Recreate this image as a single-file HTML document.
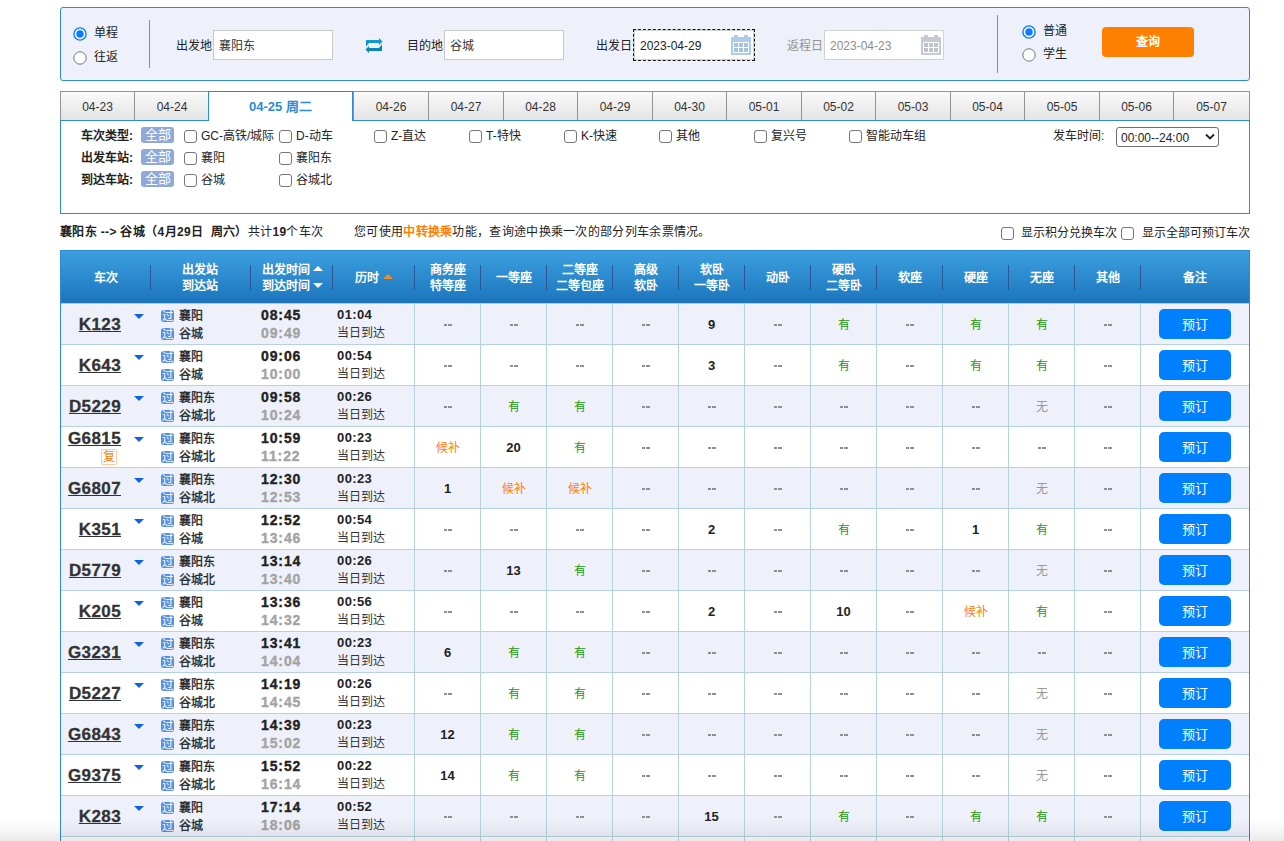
<!DOCTYPE html><html lang="zh-CN"><head><meta charset="utf-8"><title>12306</title><style>
*{box-sizing:border-box;margin:0;padding:0}
html,body{width:1284px;height:841px;overflow:hidden;background:#fff}
body{position:relative;font-family:"Liberation Sans", sans-serif;font-size:12px;color:#333}
.a{position:absolute;white-space:nowrap}
.t{line-height:16px;height:16px}
.radio{position:absolute;width:14px;height:14px}

.cb{position:absolute;width:13px;height:13px;border:1px solid #767676;border-radius:3px;background:#fff}
.lab{position:absolute;white-space:nowrap;line-height:16px;font-size:12px;color:#222}
.inp{position:absolute;background:#fff;border:1px solid #c9c9c9}
.tab{position:absolute;top:91px;height:30px;border-top:1px solid #939393;border-left:1px solid #939393;background:linear-gradient(#fafafa,#e3e3e3);text-align:center;line-height:31px;font-size:12px;color:#333}
.badge{position:absolute;width:33px;height:16px;border-radius:3px;background:#8ea9da;color:#fff;font-size:13px;line-height:16px;text-align:center}
.flab{position:absolute;font-weight:bold;font-size:12px;line-height:16px;color:#222;white-space:nowrap}
.ftxt{position:absolute;font-size:12px;line-height:16px;color:#222;white-space:nowrap}
.hd{position:absolute;top:250px;left:60px;width:1190px;height:53px;border-top:1px solid #2a8ad2;background:linear-gradient(#3c9fdf,#1c75bd)}
.hdv{position:absolute;top:265px;width:1px;height:25px;background:#2d5597}
.ht{position:absolute;color:#fff;font-weight:bold;font-size:12px;line-height:16px;text-align:center;white-space:nowrap}
.row{position:absolute;left:60px;width:1190px;height:41px;border-bottom:1px solid #b6d2e2}
.vl{position:absolute;width:1px;background:#b6d2e2}
.tn{position:absolute;font-weight:bold;font-size:17px;line-height:20px;letter-spacing:0.4px;-webkit-text-stroke:0.3px #333;text-decoration:underline;text-decoration-thickness:1px;text-underline-offset:1px;color:#333;text-align:right;white-space:nowrap}
.tri{position:absolute;width:0;height:0;border-left:5px solid transparent;border-right:5px solid transparent;border-top:5.5px solid #0d62e6}
.guo{position:absolute;width:13px;height:12px;border-radius:2.5px;background:#5b8fdf;color:#fff;font-size:11.5px;line-height:12px;text-align:center;overflow:hidden}
.st{position:absolute;font-size:12px;line-height:16px;color:#222;-webkit-text-stroke:0.3px #222;white-space:nowrap}
.tm{position:absolute;font-size:14px;line-height:16px;font-weight:bold;white-space:nowrap;letter-spacing:0.9px;-webkit-text-stroke:0.35px currentColor}
.du{position:absolute;font-size:13px;line-height:16px;font-weight:bold;color:#222;white-space:nowrap;letter-spacing:0.4px}
.dd{position:absolute;font-size:12px;line-height:16px;color:#333;white-space:nowrap}
.sv{position:absolute;width:65px;text-align:center;line-height:16px;font-size:12px;white-space:nowrap}
.btn{position:absolute;width:72px;height:30px;border-radius:5px;background:#0080ff;color:#fff;font-size:13px;line-height:31px;text-align:center;font-weight:500}
</style></head><body>
<div class="a" style="left:60px;top:7px;width:1190px;height:74px;border:1px solid #2f8bd1;border-radius:3px;background:#eef1f9"></div>
<svg class="a" style="left:72.5px;top:26.5px" width="14" height="14" viewBox="0 0 14 14"><circle cx="7" cy="7" r="6.1" fill="#fff" stroke="#0a7cff" stroke-width="1.4"/><circle cx="7" cy="7" r="3.7" fill="#0a7cff"/></svg>
<svg class="a" style="left:72.5px;top:50.5px" width="14" height="14" viewBox="0 0 14 14"><circle cx="7" cy="7" r="6.2" fill="#fff" stroke="#777" stroke-width="1"/></svg>
<div class="lab" style="left:94px;top:25px">单程</div>
<div class="lab" style="left:94px;top:49px">往返</div>
<div class="a" style="left:149px;top:20px;width:1px;height:48px;background:#4d9ad6"></div>
<div class="lab" style="left:176px;top:38px">出发地</div>
<div class="inp" style="left:213px;top:30px;width:120px;height:30px"></div>
<div class="lab" style="left:219px;top:38px;color:#333">襄阳东</div>
<svg class="a" style="left:364px;top:36px" width="20" height="19" viewBox="0 0 20 19"><defs><linearGradient id="sg" x1="0" y1="0" x2="0" y2="1"><stop offset="0" stop-color="#12a2da"/><stop offset="1" stop-color="#0a7bab"/></linearGradient></defs><path d="M2 4 H15 V2 L18.5 5.5 L15 9 V7 H5 L2 10.5 Z M18 8 V15 H5 V17 L1.5 13.5 L5 10 V12 H15 Z" fill="url(#sg)"/></svg>
<div class="lab" style="left:407px;top:38px">目的地</div>
<div class="inp" style="left:444px;top:30px;width:120px;height:30px"></div>
<div class="lab" style="left:450px;top:38px;color:#333">谷城</div>
<div class="lab" style="left:596px;top:38px">出发日</div>
<div class="inp" style="left:634px;top:30px;width:120px;height:30px;border-color:#d0d0d0"></div>
<div class="a" style="left:633px;top:29px;width:122px;height:32px;border:1px dashed #111"></div>
<div class="lab" style="left:640px;top:38px;color:#222">2023-04-29</div>
<svg class="a" style="left:731px;top:35px" width="20" height="20" viewBox="0 0 20 20"><rect x="0" y="2" width="20" height="18" fill="#abcdea"/><rect x="3" y="0" width="4" height="2" fill="#abcdea"/><rect x="13" y="0" width="4" height="2" fill="#abcdea"/><rect x="2" y="7" width="16" height="11" fill="#fff"/><g fill="#a3c3e2"><rect x="3" y="8" width="4" height="4"/><rect x="8" y="8" width="4" height="4"/><rect x="13" y="8" width="4" height="4"/><rect x="3" y="13" width="4" height="4"/><rect x="8" y="13" width="4" height="4"/><rect x="13" y="13" width="4" height="4"/></g></svg>
<div class="lab" style="left:787px;top:38px;color:#939393">返程日</div>
<div class="inp" style="left:824px;top:30px;width:120px;height:30px;border-color:#d2d2d2"></div>
<div class="lab" style="left:830px;top:38px;color:#8e8e8e">2023-04-23</div>
<svg class="a" style="left:921px;top:35px" width="20" height="20" viewBox="0 0 20 20"><rect x="0" y="2" width="20" height="18" fill="#c6cad4"/><rect x="3" y="0" width="4" height="2" fill="#c6cad4"/><rect x="13" y="0" width="4" height="2" fill="#c6cad4"/><rect x="2" y="7" width="16" height="11" fill="#fff"/><g fill="#bfc3cd"><rect x="3" y="8" width="4" height="4"/><rect x="8" y="8" width="4" height="4"/><rect x="13" y="8" width="4" height="4"/><rect x="3" y="13" width="4" height="4"/><rect x="8" y="13" width="4" height="4"/><rect x="13" y="13" width="4" height="4"/></g></svg>
<div class="a" style="left:997px;top:15px;width:1px;height:58px;background:#4d9ad6"></div>
<svg class="a" style="left:1021.5px;top:24.5px" width="14" height="14" viewBox="0 0 14 14"><circle cx="7" cy="7" r="6.1" fill="#fff" stroke="#0a7cff" stroke-width="1.4"/><circle cx="7" cy="7" r="3.7" fill="#0a7cff"/></svg>
<svg class="a" style="left:1021.5px;top:47.5px" width="14" height="14" viewBox="0 0 14 14"><circle cx="7" cy="7" r="6.2" fill="#fff" stroke="#777" stroke-width="1"/></svg>
<div class="lab" style="left:1043px;top:23px">普通</div>
<div class="lab" style="left:1043px;top:46px">学生</div>
<div class="a" style="left:1102px;top:27px;width:92px;height:30px;border-radius:4px;background:#ff8000;color:#fff;font-size:12px;line-height:31px;text-align:center;font-weight:bold">查询</div>
<div class="a" style="left:60px;top:120px;width:1190px;height:94px;border:1px solid #2f8bd1;background:#fff"></div>
<div class="tab" style="left:60px;width:74px">04-23</div>
<div class="tab" style="left:134px;width:75px">04-24</div>
<div class="a" style="left:208px;top:91px;width:145px;height:30px;border:1px solid #2f8bd1;border-bottom:none;background:#fff;text-align:center;line-height:29px;font-size:13px;font-weight:bold;color:#2a8ad8">04-25 周二</div>
<div class="tab" style="left:353px;width:75px">04-26</div>
<div class="tab" style="left:428px;width:75px">04-27</div>
<div class="tab" style="left:503px;width:74px">04-28</div>
<div class="tab" style="left:577px;width:75px">04-29</div>
<div class="tab" style="left:652px;width:74px">04-30</div>
<div class="tab" style="left:726px;width:75px">05-01</div>
<div class="tab" style="left:801px;width:74px">05-02</div>
<div class="tab" style="left:875px;width:75px">05-03</div>
<div class="tab" style="left:950px;width:74px">05-04</div>
<div class="tab" style="left:1024px;width:75px">05-05</div>
<div class="tab" style="left:1099px;width:74px">05-06</div>
<div class="tab" style="left:1173px;width:77px;border-right:1px solid #939393">05-07</div>
<div class="a" style="left:60px;top:120px;width:149px;height:1px;background:#2f8bd1"></div>
<div class="a" style="left:353px;top:120px;width:897px;height:1px;background:#2f8bd1"></div>
<div class="flab" style="left:81px;top:128px">车次类型:</div>
<div class="badge" style="left:141px;top:127px">全部</div>
<div class="flab" style="left:81px;top:150px">出发车站:</div>
<div class="badge" style="left:141px;top:149px">全部</div>
<div class="flab" style="left:81px;top:172px">到达车站:</div>
<div class="badge" style="left:141px;top:171px">全部</div>
<div class="cb" style="left:184px;top:130px"></div>
<div class="ftxt" style="left:201px;top:128px">GC-高铁/城际</div>
<div class="cb" style="left:279px;top:130px"></div>
<div class="ftxt" style="left:296px;top:128px">D-动车</div>
<div class="cb" style="left:374px;top:130px"></div>
<div class="ftxt" style="left:391px;top:128px">Z-直达</div>
<div class="cb" style="left:469px;top:130px"></div>
<div class="ftxt" style="left:486px;top:128px">T-特快</div>
<div class="cb" style="left:564px;top:130px"></div>
<div class="ftxt" style="left:581px;top:128px">K-快速</div>
<div class="cb" style="left:659px;top:130px"></div>
<div class="ftxt" style="left:676px;top:128px">其他</div>
<div class="cb" style="left:754px;top:130px"></div>
<div class="ftxt" style="left:771px;top:128px">复兴号</div>
<div class="cb" style="left:849px;top:130px"></div>
<div class="ftxt" style="left:866px;top:128px">智能动车组</div>
<div class="cb" style="left:184px;top:152px"></div>
<div class="ftxt" style="left:201px;top:150px">襄阳</div>
<div class="cb" style="left:279px;top:152px"></div>
<div class="ftxt" style="left:296px;top:150px">襄阳东</div>
<div class="cb" style="left:184px;top:174px"></div>
<div class="ftxt" style="left:201px;top:172px">谷城</div>
<div class="cb" style="left:279px;top:174px"></div>
<div class="ftxt" style="left:296px;top:172px">谷城北</div>
<div class="ftxt" style="left:1053px;top:128px">发车时间:</div>
<div class="a" style="left:1116px;top:127px;width:103px;height:20px;border:1px solid #6f6f6f;border-radius:3px;background:#fff"></div>
<div class="ftxt" style="left:1121px;top:130px;font-size:12px;color:#222">00:00--24:00</div>
<svg class="a" style="left:1205px;top:133px" width="10" height="8" viewBox="0 0 10 8"><path d="M1 1.5 L5 5.5 L9 1.5" stroke="#222" stroke-width="1.8" fill="none"/></svg>
<div class="a" style="left:60px;top:224px;font-size:12px;line-height:16px;color:#222;letter-spacing:0.35px"><b>襄阳东 --&gt; 谷城（4月29日&nbsp; 周六）</b>共计<b>19</b>个车次</div>
<div class="a" style="left:354px;top:224px;font-size:12px;line-height:16px;color:#222;letter-spacing:0.3px">您可使用<b style="color:#ff8000">中转换乘</b>功能，查询途中换乘一次的部分列车余票情况。</div>
<div class="cb" style="left:1001px;top:227px"></div>
<div class="ftxt" style="left:1021px;top:225px">显示积分兑换车次</div>
<div class="cb" style="left:1121px;top:227px"></div>
<div class="ftxt" style="left:1142px;top:225px">显示全部可预订车次</div>
<div class="hd"></div>
<div class="a" style="left:60px;top:303px;width:1190px;height:1px;background:#a6d0e6"></div>
<div class="hdv" style="left:150px"></div>
<div class="hdv" style="left:250px"></div>
<div class="hdv" style="left:332px"></div>
<div class="hdv" style="left:414px"></div>
<div class="hdv" style="left:480px"></div>
<div class="hdv" style="left:546px"></div>
<div class="hdv" style="left:612px"></div>
<div class="hdv" style="left:678px"></div>
<div class="hdv" style="left:744px"></div>
<div class="hdv" style="left:810px"></div>
<div class="hdv" style="left:876px"></div>
<div class="hdv" style="left:942px"></div>
<div class="hdv" style="left:1008px"></div>
<div class="hdv" style="left:1074px"></div>
<div class="hdv" style="left:1140px"></div>
<div class="ht" style="left:46px;top:270px;width:120px">车次</div>
<div class="ht" style="left:140px;top:262px;width:120px">出发站</div>
<div class="ht" style="left:140px;top:278px;width:120px">到达站</div>
<div class="ht" style="left:262px;top:262px">出发时间</div>
<div class="ht" style="left:262px;top:278px">到达时间</div>
<div class="a" style="left:313px;top:266px;width:0;height:0;border-left:5px solid transparent;border-right:5px solid transparent;border-bottom:5px solid #fff"></div>
<div class="a" style="left:313px;top:283px;width:0;height:0;border-left:5px solid transparent;border-right:5px solid transparent;border-top:5px solid #fff"></div>
<div class="ht" style="left:355px;top:270px">历时</div>
<div class="a" style="left:383px;top:274px;width:0;height:0;border-left:5px solid transparent;border-right:5px solid transparent;border-bottom:5px solid #f58a2a"></div>
<div class="ht" style="left:388px;top:262px;width:120px">商务座</div>
<div class="ht" style="left:388px;top:278px;width:120px">特等座</div>
<div class="ht" style="left:454px;top:270px;width:120px">一等座</div>
<div class="ht" style="left:520px;top:262px;width:120px">二等座</div>
<div class="ht" style="left:520px;top:278px;width:120px">二等包座</div>
<div class="ht" style="left:586px;top:262px;width:120px">高级</div>
<div class="ht" style="left:586px;top:278px;width:120px">软卧</div>
<div class="ht" style="left:652px;top:262px;width:120px">软卧</div>
<div class="ht" style="left:652px;top:278px;width:120px">一等卧</div>
<div class="ht" style="left:718px;top:270px;width:120px">动卧</div>
<div class="ht" style="left:784px;top:262px;width:120px">硬卧</div>
<div class="ht" style="left:784px;top:278px;width:120px">二等卧</div>
<div class="ht" style="left:850px;top:270px;width:120px">软座</div>
<div class="ht" style="left:916px;top:270px;width:120px">硬座</div>
<div class="ht" style="left:982px;top:270px;width:120px">无座</div>
<div class="ht" style="left:1048px;top:270px;width:120px">其他</div>
<div class="ht" style="left:1135px;top:270px;width:120px">备注</div>
<div class="row" style="top:304px;background:#eef1f9"></div>
<div class="tn" style="left:40px;top:315px;width:81px">K123</div>
<div class="tri" style="left:134px;top:314px"></div>
<div class="guo" style="left:161px;top:310px">过</div>
<div class="guo" style="left:161px;top:328px">过</div>
<div class="st" style="left:179px;top:308px">襄阳</div>
<div class="st" style="left:179px;top:326px">谷城</div>
<div class="tm" style="left:261px;top:307px;color:#222">08:45</div>
<div class="tm" style="left:261px;top:325px;color:#a3a3a3">09:49</div>
<div class="du" style="left:337px;top:307px">01:04</div>
<div class="dd" style="left:337px;top:325px">当日到达</div>
<div class="a" style="left:444px;top:324px;width:8px;height:2px;background:linear-gradient(90deg,#8f8f8f 0,#8f8f8f 3.5px,transparent 3.5px,transparent 4.5px,#8f8f8f 4.5px)"></div>
<div class="a" style="left:510px;top:324px;width:8px;height:2px;background:linear-gradient(90deg,#8f8f8f 0,#8f8f8f 3.5px,transparent 3.5px,transparent 4.5px,#8f8f8f 4.5px)"></div>
<div class="a" style="left:576px;top:324px;width:8px;height:2px;background:linear-gradient(90deg,#8f8f8f 0,#8f8f8f 3.5px,transparent 3.5px,transparent 4.5px,#8f8f8f 4.5px)"></div>
<div class="a" style="left:642px;top:324px;width:8px;height:2px;background:linear-gradient(90deg,#8f8f8f 0,#8f8f8f 3.5px,transparent 3.5px,transparent 4.5px,#8f8f8f 4.5px)"></div>
<div class="sv" style="left:679px;top:317px;color:#222;font-weight:bold;font-size:13px">9</div>
<div class="a" style="left:774px;top:324px;width:8px;height:2px;background:linear-gradient(90deg,#8f8f8f 0,#8f8f8f 3.5px,transparent 3.5px,transparent 4.5px,#8f8f8f 4.5px)"></div>
<div class="sv" style="left:811px;top:317px;color:#21990f;font-weight:500">有</div>
<div class="a" style="left:906px;top:324px;width:8px;height:2px;background:linear-gradient(90deg,#8f8f8f 0,#8f8f8f 3.5px,transparent 3.5px,transparent 4.5px,#8f8f8f 4.5px)"></div>
<div class="sv" style="left:943px;top:317px;color:#21990f;font-weight:500">有</div>
<div class="sv" style="left:1009px;top:317px;color:#21990f;font-weight:500">有</div>
<div class="a" style="left:1104px;top:324px;width:8px;height:2px;background:linear-gradient(90deg,#8f8f8f 0,#8f8f8f 3.5px,transparent 3.5px,transparent 4.5px,#8f8f8f 4.5px)"></div>
<div class="btn" style="left:1159px;top:309px">预订</div>
<div class="row" style="top:345px;background:#fff"></div>
<div class="tn" style="left:40px;top:356px;width:81px">K643</div>
<div class="tri" style="left:134px;top:355px"></div>
<div class="guo" style="left:161px;top:351px">过</div>
<div class="guo" style="left:161px;top:369px">过</div>
<div class="st" style="left:179px;top:349px">襄阳</div>
<div class="st" style="left:179px;top:367px">谷城</div>
<div class="tm" style="left:261px;top:348px;color:#222">09:06</div>
<div class="tm" style="left:261px;top:366px;color:#a3a3a3">10:00</div>
<div class="du" style="left:337px;top:348px">00:54</div>
<div class="dd" style="left:337px;top:366px">当日到达</div>
<div class="a" style="left:444px;top:365px;width:8px;height:2px;background:linear-gradient(90deg,#8f8f8f 0,#8f8f8f 3.5px,transparent 3.5px,transparent 4.5px,#8f8f8f 4.5px)"></div>
<div class="a" style="left:510px;top:365px;width:8px;height:2px;background:linear-gradient(90deg,#8f8f8f 0,#8f8f8f 3.5px,transparent 3.5px,transparent 4.5px,#8f8f8f 4.5px)"></div>
<div class="a" style="left:576px;top:365px;width:8px;height:2px;background:linear-gradient(90deg,#8f8f8f 0,#8f8f8f 3.5px,transparent 3.5px,transparent 4.5px,#8f8f8f 4.5px)"></div>
<div class="a" style="left:642px;top:365px;width:8px;height:2px;background:linear-gradient(90deg,#8f8f8f 0,#8f8f8f 3.5px,transparent 3.5px,transparent 4.5px,#8f8f8f 4.5px)"></div>
<div class="sv" style="left:679px;top:358px;color:#222;font-weight:bold;font-size:13px">3</div>
<div class="a" style="left:774px;top:365px;width:8px;height:2px;background:linear-gradient(90deg,#8f8f8f 0,#8f8f8f 3.5px,transparent 3.5px,transparent 4.5px,#8f8f8f 4.5px)"></div>
<div class="sv" style="left:811px;top:358px;color:#21990f;font-weight:500">有</div>
<div class="a" style="left:906px;top:365px;width:8px;height:2px;background:linear-gradient(90deg,#8f8f8f 0,#8f8f8f 3.5px,transparent 3.5px,transparent 4.5px,#8f8f8f 4.5px)"></div>
<div class="sv" style="left:943px;top:358px;color:#21990f;font-weight:500">有</div>
<div class="sv" style="left:1009px;top:358px;color:#21990f;font-weight:500">有</div>
<div class="a" style="left:1104px;top:365px;width:8px;height:2px;background:linear-gradient(90deg,#8f8f8f 0,#8f8f8f 3.5px,transparent 3.5px,transparent 4.5px,#8f8f8f 4.5px)"></div>
<div class="btn" style="left:1159px;top:350px">预订</div>
<div class="row" style="top:386px;background:#eef1f9"></div>
<div class="tn" style="left:40px;top:397px;width:81px">D5229</div>
<div class="tri" style="left:134px;top:396px"></div>
<div class="guo" style="left:161px;top:392px">过</div>
<div class="guo" style="left:161px;top:410px">过</div>
<div class="st" style="left:179px;top:390px">襄阳东</div>
<div class="st" style="left:179px;top:408px">谷城北</div>
<div class="tm" style="left:261px;top:389px;color:#222">09:58</div>
<div class="tm" style="left:261px;top:407px;color:#a3a3a3">10:24</div>
<div class="du" style="left:337px;top:389px">00:26</div>
<div class="dd" style="left:337px;top:407px">当日到达</div>
<div class="a" style="left:444px;top:406px;width:8px;height:2px;background:linear-gradient(90deg,#8f8f8f 0,#8f8f8f 3.5px,transparent 3.5px,transparent 4.5px,#8f8f8f 4.5px)"></div>
<div class="sv" style="left:481px;top:399px;color:#21990f;font-weight:500">有</div>
<div class="sv" style="left:547px;top:399px;color:#21990f;font-weight:500">有</div>
<div class="a" style="left:642px;top:406px;width:8px;height:2px;background:linear-gradient(90deg,#8f8f8f 0,#8f8f8f 3.5px,transparent 3.5px,transparent 4.5px,#8f8f8f 4.5px)"></div>
<div class="a" style="left:708px;top:406px;width:8px;height:2px;background:linear-gradient(90deg,#8f8f8f 0,#8f8f8f 3.5px,transparent 3.5px,transparent 4.5px,#8f8f8f 4.5px)"></div>
<div class="a" style="left:774px;top:406px;width:8px;height:2px;background:linear-gradient(90deg,#8f8f8f 0,#8f8f8f 3.5px,transparent 3.5px,transparent 4.5px,#8f8f8f 4.5px)"></div>
<div class="a" style="left:840px;top:406px;width:8px;height:2px;background:linear-gradient(90deg,#8f8f8f 0,#8f8f8f 3.5px,transparent 3.5px,transparent 4.5px,#8f8f8f 4.5px)"></div>
<div class="a" style="left:906px;top:406px;width:8px;height:2px;background:linear-gradient(90deg,#8f8f8f 0,#8f8f8f 3.5px,transparent 3.5px,transparent 4.5px,#8f8f8f 4.5px)"></div>
<div class="a" style="left:972px;top:406px;width:8px;height:2px;background:linear-gradient(90deg,#8f8f8f 0,#8f8f8f 3.5px,transparent 3.5px,transparent 4.5px,#8f8f8f 4.5px)"></div>
<div class="sv" style="left:1009px;top:399px;color:#999">无</div>
<div class="a" style="left:1104px;top:406px;width:8px;height:2px;background:linear-gradient(90deg,#8f8f8f 0,#8f8f8f 3.5px,transparent 3.5px,transparent 4.5px,#8f8f8f 4.5px)"></div>
<div class="btn" style="left:1159px;top:391px">预订</div>
<div class="row" style="top:427px;background:#fff"></div>
<div class="tn" style="left:40px;top:429px;width:81px">G6815</div>
<div class="a" style="left:101px;top:449px;width:16px;height:16px;border:1px solid #ffcc99;border-radius:2px;color:#ff7a00;font-size:12px;line-height:14px;text-align:center">复</div>
<div class="tri" style="left:134px;top:437px"></div>
<div class="guo" style="left:161px;top:433px">过</div>
<div class="guo" style="left:161px;top:451px">过</div>
<div class="st" style="left:179px;top:431px">襄阳东</div>
<div class="st" style="left:179px;top:449px">谷城北</div>
<div class="tm" style="left:261px;top:430px;color:#222">10:59</div>
<div class="tm" style="left:261px;top:448px;color:#a3a3a3">11:22</div>
<div class="du" style="left:337px;top:430px">00:23</div>
<div class="dd" style="left:337px;top:448px">当日到达</div>
<div class="sv" style="left:415px;top:440px;color:#ff8000;font-weight:500">候补</div>
<div class="sv" style="left:481px;top:440px;color:#222;font-weight:bold;font-size:13px">20</div>
<div class="sv" style="left:547px;top:440px;color:#21990f;font-weight:500">有</div>
<div class="a" style="left:642px;top:447px;width:8px;height:2px;background:linear-gradient(90deg,#8f8f8f 0,#8f8f8f 3.5px,transparent 3.5px,transparent 4.5px,#8f8f8f 4.5px)"></div>
<div class="a" style="left:708px;top:447px;width:8px;height:2px;background:linear-gradient(90deg,#8f8f8f 0,#8f8f8f 3.5px,transparent 3.5px,transparent 4.5px,#8f8f8f 4.5px)"></div>
<div class="a" style="left:774px;top:447px;width:8px;height:2px;background:linear-gradient(90deg,#8f8f8f 0,#8f8f8f 3.5px,transparent 3.5px,transparent 4.5px,#8f8f8f 4.5px)"></div>
<div class="a" style="left:840px;top:447px;width:8px;height:2px;background:linear-gradient(90deg,#8f8f8f 0,#8f8f8f 3.5px,transparent 3.5px,transparent 4.5px,#8f8f8f 4.5px)"></div>
<div class="a" style="left:906px;top:447px;width:8px;height:2px;background:linear-gradient(90deg,#8f8f8f 0,#8f8f8f 3.5px,transparent 3.5px,transparent 4.5px,#8f8f8f 4.5px)"></div>
<div class="a" style="left:972px;top:447px;width:8px;height:2px;background:linear-gradient(90deg,#8f8f8f 0,#8f8f8f 3.5px,transparent 3.5px,transparent 4.5px,#8f8f8f 4.5px)"></div>
<div class="a" style="left:1038px;top:447px;width:8px;height:2px;background:linear-gradient(90deg,#8f8f8f 0,#8f8f8f 3.5px,transparent 3.5px,transparent 4.5px,#8f8f8f 4.5px)"></div>
<div class="a" style="left:1104px;top:447px;width:8px;height:2px;background:linear-gradient(90deg,#8f8f8f 0,#8f8f8f 3.5px,transparent 3.5px,transparent 4.5px,#8f8f8f 4.5px)"></div>
<div class="btn" style="left:1159px;top:432px">预订</div>
<div class="row" style="top:468px;background:#eef1f9"></div>
<div class="tn" style="left:40px;top:479px;width:81px">G6807</div>
<div class="tri" style="left:134px;top:478px"></div>
<div class="guo" style="left:161px;top:474px">过</div>
<div class="guo" style="left:161px;top:492px">过</div>
<div class="st" style="left:179px;top:472px">襄阳东</div>
<div class="st" style="left:179px;top:490px">谷城北</div>
<div class="tm" style="left:261px;top:471px;color:#222">12:30</div>
<div class="tm" style="left:261px;top:489px;color:#a3a3a3">12:53</div>
<div class="du" style="left:337px;top:471px">00:23</div>
<div class="dd" style="left:337px;top:489px">当日到达</div>
<div class="sv" style="left:415px;top:481px;color:#222;font-weight:bold;font-size:13px">1</div>
<div class="sv" style="left:481px;top:481px;color:#ff8000;font-weight:500">候补</div>
<div class="sv" style="left:547px;top:481px;color:#ff8000;font-weight:500">候补</div>
<div class="a" style="left:642px;top:488px;width:8px;height:2px;background:linear-gradient(90deg,#8f8f8f 0,#8f8f8f 3.5px,transparent 3.5px,transparent 4.5px,#8f8f8f 4.5px)"></div>
<div class="a" style="left:708px;top:488px;width:8px;height:2px;background:linear-gradient(90deg,#8f8f8f 0,#8f8f8f 3.5px,transparent 3.5px,transparent 4.5px,#8f8f8f 4.5px)"></div>
<div class="a" style="left:774px;top:488px;width:8px;height:2px;background:linear-gradient(90deg,#8f8f8f 0,#8f8f8f 3.5px,transparent 3.5px,transparent 4.5px,#8f8f8f 4.5px)"></div>
<div class="a" style="left:840px;top:488px;width:8px;height:2px;background:linear-gradient(90deg,#8f8f8f 0,#8f8f8f 3.5px,transparent 3.5px,transparent 4.5px,#8f8f8f 4.5px)"></div>
<div class="a" style="left:906px;top:488px;width:8px;height:2px;background:linear-gradient(90deg,#8f8f8f 0,#8f8f8f 3.5px,transparent 3.5px,transparent 4.5px,#8f8f8f 4.5px)"></div>
<div class="a" style="left:972px;top:488px;width:8px;height:2px;background:linear-gradient(90deg,#8f8f8f 0,#8f8f8f 3.5px,transparent 3.5px,transparent 4.5px,#8f8f8f 4.5px)"></div>
<div class="sv" style="left:1009px;top:481px;color:#999">无</div>
<div class="a" style="left:1104px;top:488px;width:8px;height:2px;background:linear-gradient(90deg,#8f8f8f 0,#8f8f8f 3.5px,transparent 3.5px,transparent 4.5px,#8f8f8f 4.5px)"></div>
<div class="btn" style="left:1159px;top:473px">预订</div>
<div class="row" style="top:509px;background:#fff"></div>
<div class="tn" style="left:40px;top:520px;width:81px">K351</div>
<div class="tri" style="left:134px;top:519px"></div>
<div class="guo" style="left:161px;top:515px">过</div>
<div class="guo" style="left:161px;top:533px">过</div>
<div class="st" style="left:179px;top:513px">襄阳</div>
<div class="st" style="left:179px;top:531px">谷城</div>
<div class="tm" style="left:261px;top:512px;color:#222">12:52</div>
<div class="tm" style="left:261px;top:530px;color:#a3a3a3">13:46</div>
<div class="du" style="left:337px;top:512px">00:54</div>
<div class="dd" style="left:337px;top:530px">当日到达</div>
<div class="a" style="left:444px;top:529px;width:8px;height:2px;background:linear-gradient(90deg,#8f8f8f 0,#8f8f8f 3.5px,transparent 3.5px,transparent 4.5px,#8f8f8f 4.5px)"></div>
<div class="a" style="left:510px;top:529px;width:8px;height:2px;background:linear-gradient(90deg,#8f8f8f 0,#8f8f8f 3.5px,transparent 3.5px,transparent 4.5px,#8f8f8f 4.5px)"></div>
<div class="a" style="left:576px;top:529px;width:8px;height:2px;background:linear-gradient(90deg,#8f8f8f 0,#8f8f8f 3.5px,transparent 3.5px,transparent 4.5px,#8f8f8f 4.5px)"></div>
<div class="a" style="left:642px;top:529px;width:8px;height:2px;background:linear-gradient(90deg,#8f8f8f 0,#8f8f8f 3.5px,transparent 3.5px,transparent 4.5px,#8f8f8f 4.5px)"></div>
<div class="sv" style="left:679px;top:522px;color:#222;font-weight:bold;font-size:13px">2</div>
<div class="a" style="left:774px;top:529px;width:8px;height:2px;background:linear-gradient(90deg,#8f8f8f 0,#8f8f8f 3.5px,transparent 3.5px,transparent 4.5px,#8f8f8f 4.5px)"></div>
<div class="sv" style="left:811px;top:522px;color:#21990f;font-weight:500">有</div>
<div class="a" style="left:906px;top:529px;width:8px;height:2px;background:linear-gradient(90deg,#8f8f8f 0,#8f8f8f 3.5px,transparent 3.5px,transparent 4.5px,#8f8f8f 4.5px)"></div>
<div class="sv" style="left:943px;top:522px;color:#222;font-weight:bold;font-size:13px">1</div>
<div class="sv" style="left:1009px;top:522px;color:#21990f;font-weight:500">有</div>
<div class="a" style="left:1104px;top:529px;width:8px;height:2px;background:linear-gradient(90deg,#8f8f8f 0,#8f8f8f 3.5px,transparent 3.5px,transparent 4.5px,#8f8f8f 4.5px)"></div>
<div class="btn" style="left:1159px;top:514px">预订</div>
<div class="row" style="top:550px;background:#eef1f9"></div>
<div class="tn" style="left:40px;top:561px;width:81px">D5779</div>
<div class="tri" style="left:134px;top:560px"></div>
<div class="guo" style="left:161px;top:556px">过</div>
<div class="guo" style="left:161px;top:574px">过</div>
<div class="st" style="left:179px;top:554px">襄阳东</div>
<div class="st" style="left:179px;top:572px">谷城北</div>
<div class="tm" style="left:261px;top:553px;color:#222">13:14</div>
<div class="tm" style="left:261px;top:571px;color:#a3a3a3">13:40</div>
<div class="du" style="left:337px;top:553px">00:26</div>
<div class="dd" style="left:337px;top:571px">当日到达</div>
<div class="a" style="left:444px;top:570px;width:8px;height:2px;background:linear-gradient(90deg,#8f8f8f 0,#8f8f8f 3.5px,transparent 3.5px,transparent 4.5px,#8f8f8f 4.5px)"></div>
<div class="sv" style="left:481px;top:563px;color:#222;font-weight:bold;font-size:13px">13</div>
<div class="sv" style="left:547px;top:563px;color:#21990f;font-weight:500">有</div>
<div class="a" style="left:642px;top:570px;width:8px;height:2px;background:linear-gradient(90deg,#8f8f8f 0,#8f8f8f 3.5px,transparent 3.5px,transparent 4.5px,#8f8f8f 4.5px)"></div>
<div class="a" style="left:708px;top:570px;width:8px;height:2px;background:linear-gradient(90deg,#8f8f8f 0,#8f8f8f 3.5px,transparent 3.5px,transparent 4.5px,#8f8f8f 4.5px)"></div>
<div class="a" style="left:774px;top:570px;width:8px;height:2px;background:linear-gradient(90deg,#8f8f8f 0,#8f8f8f 3.5px,transparent 3.5px,transparent 4.5px,#8f8f8f 4.5px)"></div>
<div class="a" style="left:840px;top:570px;width:8px;height:2px;background:linear-gradient(90deg,#8f8f8f 0,#8f8f8f 3.5px,transparent 3.5px,transparent 4.5px,#8f8f8f 4.5px)"></div>
<div class="a" style="left:906px;top:570px;width:8px;height:2px;background:linear-gradient(90deg,#8f8f8f 0,#8f8f8f 3.5px,transparent 3.5px,transparent 4.5px,#8f8f8f 4.5px)"></div>
<div class="a" style="left:972px;top:570px;width:8px;height:2px;background:linear-gradient(90deg,#8f8f8f 0,#8f8f8f 3.5px,transparent 3.5px,transparent 4.5px,#8f8f8f 4.5px)"></div>
<div class="sv" style="left:1009px;top:563px;color:#999">无</div>
<div class="a" style="left:1104px;top:570px;width:8px;height:2px;background:linear-gradient(90deg,#8f8f8f 0,#8f8f8f 3.5px,transparent 3.5px,transparent 4.5px,#8f8f8f 4.5px)"></div>
<div class="btn" style="left:1159px;top:555px">预订</div>
<div class="row" style="top:591px;background:#fff"></div>
<div class="tn" style="left:40px;top:602px;width:81px">K205</div>
<div class="tri" style="left:134px;top:601px"></div>
<div class="guo" style="left:161px;top:597px">过</div>
<div class="guo" style="left:161px;top:615px">过</div>
<div class="st" style="left:179px;top:595px">襄阳</div>
<div class="st" style="left:179px;top:613px">谷城</div>
<div class="tm" style="left:261px;top:594px;color:#222">13:36</div>
<div class="tm" style="left:261px;top:612px;color:#a3a3a3">14:32</div>
<div class="du" style="left:337px;top:594px">00:56</div>
<div class="dd" style="left:337px;top:612px">当日到达</div>
<div class="a" style="left:444px;top:611px;width:8px;height:2px;background:linear-gradient(90deg,#8f8f8f 0,#8f8f8f 3.5px,transparent 3.5px,transparent 4.5px,#8f8f8f 4.5px)"></div>
<div class="a" style="left:510px;top:611px;width:8px;height:2px;background:linear-gradient(90deg,#8f8f8f 0,#8f8f8f 3.5px,transparent 3.5px,transparent 4.5px,#8f8f8f 4.5px)"></div>
<div class="a" style="left:576px;top:611px;width:8px;height:2px;background:linear-gradient(90deg,#8f8f8f 0,#8f8f8f 3.5px,transparent 3.5px,transparent 4.5px,#8f8f8f 4.5px)"></div>
<div class="a" style="left:642px;top:611px;width:8px;height:2px;background:linear-gradient(90deg,#8f8f8f 0,#8f8f8f 3.5px,transparent 3.5px,transparent 4.5px,#8f8f8f 4.5px)"></div>
<div class="sv" style="left:679px;top:604px;color:#222;font-weight:bold;font-size:13px">2</div>
<div class="a" style="left:774px;top:611px;width:8px;height:2px;background:linear-gradient(90deg,#8f8f8f 0,#8f8f8f 3.5px,transparent 3.5px,transparent 4.5px,#8f8f8f 4.5px)"></div>
<div class="sv" style="left:811px;top:604px;color:#222;font-weight:bold;font-size:13px">10</div>
<div class="a" style="left:906px;top:611px;width:8px;height:2px;background:linear-gradient(90deg,#8f8f8f 0,#8f8f8f 3.5px,transparent 3.5px,transparent 4.5px,#8f8f8f 4.5px)"></div>
<div class="sv" style="left:943px;top:604px;color:#ff8000;font-weight:500">候补</div>
<div class="sv" style="left:1009px;top:604px;color:#21990f;font-weight:500">有</div>
<div class="a" style="left:1104px;top:611px;width:8px;height:2px;background:linear-gradient(90deg,#8f8f8f 0,#8f8f8f 3.5px,transparent 3.5px,transparent 4.5px,#8f8f8f 4.5px)"></div>
<div class="btn" style="left:1159px;top:596px">预订</div>
<div class="row" style="top:632px;background:#eef1f9"></div>
<div class="tn" style="left:40px;top:643px;width:81px">G3231</div>
<div class="tri" style="left:134px;top:642px"></div>
<div class="guo" style="left:161px;top:638px">过</div>
<div class="guo" style="left:161px;top:656px">过</div>
<div class="st" style="left:179px;top:636px">襄阳东</div>
<div class="st" style="left:179px;top:654px">谷城北</div>
<div class="tm" style="left:261px;top:635px;color:#222">13:41</div>
<div class="tm" style="left:261px;top:653px;color:#a3a3a3">14:04</div>
<div class="du" style="left:337px;top:635px">00:23</div>
<div class="dd" style="left:337px;top:653px">当日到达</div>
<div class="sv" style="left:415px;top:645px;color:#222;font-weight:bold;font-size:13px">6</div>
<div class="sv" style="left:481px;top:645px;color:#21990f;font-weight:500">有</div>
<div class="sv" style="left:547px;top:645px;color:#21990f;font-weight:500">有</div>
<div class="a" style="left:642px;top:652px;width:8px;height:2px;background:linear-gradient(90deg,#8f8f8f 0,#8f8f8f 3.5px,transparent 3.5px,transparent 4.5px,#8f8f8f 4.5px)"></div>
<div class="a" style="left:708px;top:652px;width:8px;height:2px;background:linear-gradient(90deg,#8f8f8f 0,#8f8f8f 3.5px,transparent 3.5px,transparent 4.5px,#8f8f8f 4.5px)"></div>
<div class="a" style="left:774px;top:652px;width:8px;height:2px;background:linear-gradient(90deg,#8f8f8f 0,#8f8f8f 3.5px,transparent 3.5px,transparent 4.5px,#8f8f8f 4.5px)"></div>
<div class="a" style="left:840px;top:652px;width:8px;height:2px;background:linear-gradient(90deg,#8f8f8f 0,#8f8f8f 3.5px,transparent 3.5px,transparent 4.5px,#8f8f8f 4.5px)"></div>
<div class="a" style="left:906px;top:652px;width:8px;height:2px;background:linear-gradient(90deg,#8f8f8f 0,#8f8f8f 3.5px,transparent 3.5px,transparent 4.5px,#8f8f8f 4.5px)"></div>
<div class="a" style="left:972px;top:652px;width:8px;height:2px;background:linear-gradient(90deg,#8f8f8f 0,#8f8f8f 3.5px,transparent 3.5px,transparent 4.5px,#8f8f8f 4.5px)"></div>
<div class="a" style="left:1038px;top:652px;width:8px;height:2px;background:linear-gradient(90deg,#8f8f8f 0,#8f8f8f 3.5px,transparent 3.5px,transparent 4.5px,#8f8f8f 4.5px)"></div>
<div class="a" style="left:1104px;top:652px;width:8px;height:2px;background:linear-gradient(90deg,#8f8f8f 0,#8f8f8f 3.5px,transparent 3.5px,transparent 4.5px,#8f8f8f 4.5px)"></div>
<div class="btn" style="left:1159px;top:637px">预订</div>
<div class="row" style="top:673px;background:#fff"></div>
<div class="tn" style="left:40px;top:684px;width:81px">D5227</div>
<div class="tri" style="left:134px;top:683px"></div>
<div class="guo" style="left:161px;top:679px">过</div>
<div class="guo" style="left:161px;top:697px">过</div>
<div class="st" style="left:179px;top:677px">襄阳东</div>
<div class="st" style="left:179px;top:695px">谷城北</div>
<div class="tm" style="left:261px;top:676px;color:#222">14:19</div>
<div class="tm" style="left:261px;top:694px;color:#a3a3a3">14:45</div>
<div class="du" style="left:337px;top:676px">00:26</div>
<div class="dd" style="left:337px;top:694px">当日到达</div>
<div class="a" style="left:444px;top:693px;width:8px;height:2px;background:linear-gradient(90deg,#8f8f8f 0,#8f8f8f 3.5px,transparent 3.5px,transparent 4.5px,#8f8f8f 4.5px)"></div>
<div class="sv" style="left:481px;top:686px;color:#21990f;font-weight:500">有</div>
<div class="sv" style="left:547px;top:686px;color:#21990f;font-weight:500">有</div>
<div class="a" style="left:642px;top:693px;width:8px;height:2px;background:linear-gradient(90deg,#8f8f8f 0,#8f8f8f 3.5px,transparent 3.5px,transparent 4.5px,#8f8f8f 4.5px)"></div>
<div class="a" style="left:708px;top:693px;width:8px;height:2px;background:linear-gradient(90deg,#8f8f8f 0,#8f8f8f 3.5px,transparent 3.5px,transparent 4.5px,#8f8f8f 4.5px)"></div>
<div class="a" style="left:774px;top:693px;width:8px;height:2px;background:linear-gradient(90deg,#8f8f8f 0,#8f8f8f 3.5px,transparent 3.5px,transparent 4.5px,#8f8f8f 4.5px)"></div>
<div class="a" style="left:840px;top:693px;width:8px;height:2px;background:linear-gradient(90deg,#8f8f8f 0,#8f8f8f 3.5px,transparent 3.5px,transparent 4.5px,#8f8f8f 4.5px)"></div>
<div class="a" style="left:906px;top:693px;width:8px;height:2px;background:linear-gradient(90deg,#8f8f8f 0,#8f8f8f 3.5px,transparent 3.5px,transparent 4.5px,#8f8f8f 4.5px)"></div>
<div class="a" style="left:972px;top:693px;width:8px;height:2px;background:linear-gradient(90deg,#8f8f8f 0,#8f8f8f 3.5px,transparent 3.5px,transparent 4.5px,#8f8f8f 4.5px)"></div>
<div class="sv" style="left:1009px;top:686px;color:#999">无</div>
<div class="a" style="left:1104px;top:693px;width:8px;height:2px;background:linear-gradient(90deg,#8f8f8f 0,#8f8f8f 3.5px,transparent 3.5px,transparent 4.5px,#8f8f8f 4.5px)"></div>
<div class="btn" style="left:1159px;top:678px">预订</div>
<div class="row" style="top:714px;background:#eef1f9"></div>
<div class="tn" style="left:40px;top:725px;width:81px">G6843</div>
<div class="tri" style="left:134px;top:724px"></div>
<div class="guo" style="left:161px;top:720px">过</div>
<div class="guo" style="left:161px;top:738px">过</div>
<div class="st" style="left:179px;top:718px">襄阳东</div>
<div class="st" style="left:179px;top:736px">谷城北</div>
<div class="tm" style="left:261px;top:717px;color:#222">14:39</div>
<div class="tm" style="left:261px;top:735px;color:#a3a3a3">15:02</div>
<div class="du" style="left:337px;top:717px">00:23</div>
<div class="dd" style="left:337px;top:735px">当日到达</div>
<div class="sv" style="left:415px;top:727px;color:#222;font-weight:bold;font-size:13px">12</div>
<div class="sv" style="left:481px;top:727px;color:#21990f;font-weight:500">有</div>
<div class="sv" style="left:547px;top:727px;color:#21990f;font-weight:500">有</div>
<div class="a" style="left:642px;top:734px;width:8px;height:2px;background:linear-gradient(90deg,#8f8f8f 0,#8f8f8f 3.5px,transparent 3.5px,transparent 4.5px,#8f8f8f 4.5px)"></div>
<div class="a" style="left:708px;top:734px;width:8px;height:2px;background:linear-gradient(90deg,#8f8f8f 0,#8f8f8f 3.5px,transparent 3.5px,transparent 4.5px,#8f8f8f 4.5px)"></div>
<div class="a" style="left:774px;top:734px;width:8px;height:2px;background:linear-gradient(90deg,#8f8f8f 0,#8f8f8f 3.5px,transparent 3.5px,transparent 4.5px,#8f8f8f 4.5px)"></div>
<div class="a" style="left:840px;top:734px;width:8px;height:2px;background:linear-gradient(90deg,#8f8f8f 0,#8f8f8f 3.5px,transparent 3.5px,transparent 4.5px,#8f8f8f 4.5px)"></div>
<div class="a" style="left:906px;top:734px;width:8px;height:2px;background:linear-gradient(90deg,#8f8f8f 0,#8f8f8f 3.5px,transparent 3.5px,transparent 4.5px,#8f8f8f 4.5px)"></div>
<div class="a" style="left:972px;top:734px;width:8px;height:2px;background:linear-gradient(90deg,#8f8f8f 0,#8f8f8f 3.5px,transparent 3.5px,transparent 4.5px,#8f8f8f 4.5px)"></div>
<div class="sv" style="left:1009px;top:727px;color:#999">无</div>
<div class="a" style="left:1104px;top:734px;width:8px;height:2px;background:linear-gradient(90deg,#8f8f8f 0,#8f8f8f 3.5px,transparent 3.5px,transparent 4.5px,#8f8f8f 4.5px)"></div>
<div class="btn" style="left:1159px;top:719px">预订</div>
<div class="row" style="top:755px;background:#fff"></div>
<div class="tn" style="left:40px;top:766px;width:81px">G9375</div>
<div class="tri" style="left:134px;top:765px"></div>
<div class="guo" style="left:161px;top:761px">过</div>
<div class="guo" style="left:161px;top:779px">过</div>
<div class="st" style="left:179px;top:759px">襄阳东</div>
<div class="st" style="left:179px;top:777px">谷城北</div>
<div class="tm" style="left:261px;top:758px;color:#222">15:52</div>
<div class="tm" style="left:261px;top:776px;color:#a3a3a3">16:14</div>
<div class="du" style="left:337px;top:758px">00:22</div>
<div class="dd" style="left:337px;top:776px">当日到达</div>
<div class="sv" style="left:415px;top:768px;color:#222;font-weight:bold;font-size:13px">14</div>
<div class="sv" style="left:481px;top:768px;color:#21990f;font-weight:500">有</div>
<div class="sv" style="left:547px;top:768px;color:#21990f;font-weight:500">有</div>
<div class="a" style="left:642px;top:775px;width:8px;height:2px;background:linear-gradient(90deg,#8f8f8f 0,#8f8f8f 3.5px,transparent 3.5px,transparent 4.5px,#8f8f8f 4.5px)"></div>
<div class="a" style="left:708px;top:775px;width:8px;height:2px;background:linear-gradient(90deg,#8f8f8f 0,#8f8f8f 3.5px,transparent 3.5px,transparent 4.5px,#8f8f8f 4.5px)"></div>
<div class="a" style="left:774px;top:775px;width:8px;height:2px;background:linear-gradient(90deg,#8f8f8f 0,#8f8f8f 3.5px,transparent 3.5px,transparent 4.5px,#8f8f8f 4.5px)"></div>
<div class="a" style="left:840px;top:775px;width:8px;height:2px;background:linear-gradient(90deg,#8f8f8f 0,#8f8f8f 3.5px,transparent 3.5px,transparent 4.5px,#8f8f8f 4.5px)"></div>
<div class="a" style="left:906px;top:775px;width:8px;height:2px;background:linear-gradient(90deg,#8f8f8f 0,#8f8f8f 3.5px,transparent 3.5px,transparent 4.5px,#8f8f8f 4.5px)"></div>
<div class="a" style="left:972px;top:775px;width:8px;height:2px;background:linear-gradient(90deg,#8f8f8f 0,#8f8f8f 3.5px,transparent 3.5px,transparent 4.5px,#8f8f8f 4.5px)"></div>
<div class="sv" style="left:1009px;top:768px;color:#999">无</div>
<div class="a" style="left:1104px;top:775px;width:8px;height:2px;background:linear-gradient(90deg,#8f8f8f 0,#8f8f8f 3.5px,transparent 3.5px,transparent 4.5px,#8f8f8f 4.5px)"></div>
<div class="btn" style="left:1159px;top:760px">预订</div>
<div class="row" style="top:796px;background:#eef1f9"></div>
<div class="tn" style="left:40px;top:807px;width:81px">K283</div>
<div class="tri" style="left:134px;top:806px"></div>
<div class="guo" style="left:161px;top:802px">过</div>
<div class="guo" style="left:161px;top:820px">过</div>
<div class="st" style="left:179px;top:800px">襄阳</div>
<div class="st" style="left:179px;top:818px">谷城</div>
<div class="tm" style="left:261px;top:799px;color:#222">17:14</div>
<div class="tm" style="left:261px;top:817px;color:#a3a3a3">18:06</div>
<div class="du" style="left:337px;top:799px">00:52</div>
<div class="dd" style="left:337px;top:817px">当日到达</div>
<div class="a" style="left:444px;top:816px;width:8px;height:2px;background:linear-gradient(90deg,#8f8f8f 0,#8f8f8f 3.5px,transparent 3.5px,transparent 4.5px,#8f8f8f 4.5px)"></div>
<div class="a" style="left:510px;top:816px;width:8px;height:2px;background:linear-gradient(90deg,#8f8f8f 0,#8f8f8f 3.5px,transparent 3.5px,transparent 4.5px,#8f8f8f 4.5px)"></div>
<div class="a" style="left:576px;top:816px;width:8px;height:2px;background:linear-gradient(90deg,#8f8f8f 0,#8f8f8f 3.5px,transparent 3.5px,transparent 4.5px,#8f8f8f 4.5px)"></div>
<div class="a" style="left:642px;top:816px;width:8px;height:2px;background:linear-gradient(90deg,#8f8f8f 0,#8f8f8f 3.5px,transparent 3.5px,transparent 4.5px,#8f8f8f 4.5px)"></div>
<div class="sv" style="left:679px;top:809px;color:#222;font-weight:bold;font-size:13px">15</div>
<div class="a" style="left:774px;top:816px;width:8px;height:2px;background:linear-gradient(90deg,#8f8f8f 0,#8f8f8f 3.5px,transparent 3.5px,transparent 4.5px,#8f8f8f 4.5px)"></div>
<div class="sv" style="left:811px;top:809px;color:#21990f;font-weight:500">有</div>
<div class="a" style="left:906px;top:816px;width:8px;height:2px;background:linear-gradient(90deg,#8f8f8f 0,#8f8f8f 3.5px,transparent 3.5px,transparent 4.5px,#8f8f8f 4.5px)"></div>
<div class="sv" style="left:943px;top:809px;color:#21990f;font-weight:500">有</div>
<div class="sv" style="left:1009px;top:809px;color:#21990f;font-weight:500">有</div>
<div class="a" style="left:1104px;top:816px;width:8px;height:2px;background:linear-gradient(90deg,#8f8f8f 0,#8f8f8f 3.5px,transparent 3.5px,transparent 4.5px,#8f8f8f 4.5px)"></div>
<div class="btn" style="left:1159px;top:801px">预订</div>
<div class="row" style="top:837px;background:#fff"></div>
<div class="vl" style="left:414px;top:303px;height:575px"></div>
<div class="vl" style="left:480px;top:303px;height:575px"></div>
<div class="vl" style="left:546px;top:303px;height:575px"></div>
<div class="vl" style="left:612px;top:303px;height:575px"></div>
<div class="vl" style="left:678px;top:303px;height:575px"></div>
<div class="vl" style="left:744px;top:303px;height:575px"></div>
<div class="vl" style="left:810px;top:303px;height:575px"></div>
<div class="vl" style="left:876px;top:303px;height:575px"></div>
<div class="vl" style="left:942px;top:303px;height:575px"></div>
<div class="vl" style="left:1008px;top:303px;height:575px"></div>
<div class="vl" style="left:1074px;top:303px;height:575px"></div>
<div class="vl" style="left:1140px;top:303px;height:575px"></div>
<div class="a" style="left:60px;top:250px;width:1px;height:628px;background:#2f8bd1"></div>
<div class="a" style="left:1249px;top:250px;width:1px;height:628px;background:#2f8bd1"></div>
<div class="a" style="left:0;top:818px;width:1284px;height:23px;background:linear-gradient(rgba(0,0,0,0),rgba(0,0,0,0.03) 50%,rgba(0,0,0,0.085))"></div>
</body></html>
